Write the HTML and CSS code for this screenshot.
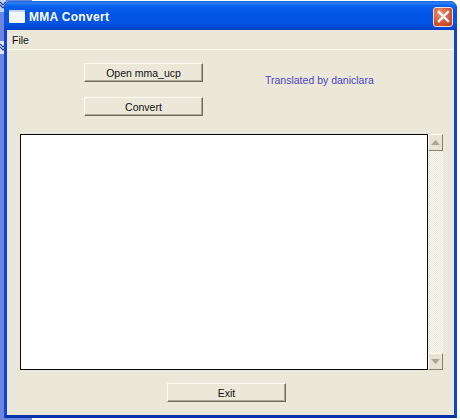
FILE: index.html
```html
<!DOCTYPE html>
<html lang="en">
<head>
<meta charset="utf-8">
<title>MMA Convert</title>
<link rel="stylesheet" href="styles.css">
</head>
<body>
<div class="desktop">
  <svg class="edge" width="6" height="56" viewBox="0 0 6 56">
    <rect x="0" y="0" width="6" height="12" fill="#c8d4f4"/>
    <rect x="0" y="41" width="6" height="13" fill="#dfe5f8"/>
    <path d="M0 2 L3 5 L6 2 M0 5 L3 8 L6 5" fill="none" stroke="#24408c" stroke-width="1.2"/>
    <path d="M0 44 L3 47 L6 44 M0 47 L3 50 L6 47" fill="none" stroke="#24408c" stroke-width="1.2"/>
  </svg>
  <div class="window">
    <div class="titlebar">
      <svg class="app-icon" width="16" height="13" viewBox="0 0 16 13"><rect x="0" y="0" width="16" height="13" rx="1" fill="#f4f8ff"/><rect x="0" y="0" width="16" height="2" fill="#c4d6f4"/></svg>
      <span class="title">MMA Convert</span>
      <button class="close" aria-label="Close">
        <svg width="13" height="13" viewBox="0 0 13 13"><path d="M2 2 L11 11 M11 2 L2 11" stroke="#fff" stroke-width="2.4" stroke-linecap="square"/></svg>
      </button>
    </div>
    <div class="menubar"><span class="menu-item">File</span></div>
    <div class="client">
      <div class="top">
        <div class="actions">
          <button class="btn wide">Open mma_ucp</button>
          <button class="btn wide">Convert</button>
        </div>
        <div class="credit">Translated by daniclara</div>
      </div>
      <div class="log">
        <div class="log-text"></div>
        <div class="scrollbar">
          <div class="arrow"><svg width="9" height="5" viewBox="0 0 9 5"><path d="M4.5 0 L9 5 L0 5 Z" fill="#a8a596"/></svg></div>
          <div class="track"></div>
          <div class="arrow"><svg width="9" height="5" viewBox="0 0 9 5"><path d="M0 0 L9 0 L4.5 5 Z" fill="#a8a596"/></svg></div>
        </div>
      </div>
      <div class="bottom"><button class="btn exit">Exit</button></div>
    </div>
  </div>
</div>
</body>
</html>
```
FILE: styles.css
```css
html, body {
  margin: 0;
  padding: 0;
}
body {
  width: 460px;
  height: 420px;
  overflow: hidden;
  background: #fdfdfd;
  font-family: "Liberation Sans", Arial, sans-serif;
}
.desktop {
  position: relative;
  width: 460px;
  height: 420px;
  box-sizing: border-box;
  padding: 1px 3px 2px 4px;
  background: linear-gradient(to right, #6d86dc 0, #6d86dc 32px, transparent 32px);
}
.edge {
  position: absolute;
  left: 0;
  top: 0;
}
.window {
  position: relative;
  height: 417px;
  box-sizing: border-box;
  display: flex;
  flex-direction: column;
  border: 3px solid #0f44d4;
  border-top: 0;
  border-bottom-color: #0832a8;
  border-radius: 7px 7px 0 0;
  background: #ebe8d9;
}
.titlebar {
  height: 29px;
  margin: 0 -3px;
  padding: 2px 4px 0 5px;
  box-sizing: border-box;
  display: flex;
  align-items: center;
  flex: none;
  border-radius: 7px 7px 0 0;
  background: linear-gradient(to bottom, #1a62dc 0, #2e80f2 2px, #0860ec 5px, #0254e4 14px, #0355e6 22px, #0340c4 29px);
  color: #fff;
}
.app-icon {
  flex: none;
}
.title {
  margin: 1px 0 0 4px;
  font-size: 12px;
  font-weight: bold;
  letter-spacing: 0.3px;
}
.close {
  margin-left: auto;
  width: 20px;
  height: 20px;
  padding: 0;
  display: flex;
  align-items: center;
  justify-content: center;
  border: 1px solid #f2dcd2;
  border-radius: 3px;
  background: radial-gradient(circle at 35% 30%, #ea9478 0, #d85a38 50%, #c03a18 100%);
}
.menubar {
  height: 20px;
  flex: none;
  box-sizing: border-box;
  padding-left: 5px;
  display: flex;
  align-items: center;
  border-bottom: 1px solid #fffff8;
  font-size: 10.5px;
  color: #111;
}
.client {
  flex: 1;
  display: flex;
  flex-direction: column;
  padding: 13px 10px 0 13px;
}
.top {
  display: flex;
  height: 71px;
  flex: none;
}
.actions {
  margin-left: 64px;
  display: flex;
  flex-direction: column;
  gap: 15px;
}
.btn {
  display: block;
  padding: 0;
  box-sizing: border-box;
  height: 19px;
  background: #ebe8d9;
  border: 1px solid;
  border-color: #fbfaf4 #6d6a5c #6d6a5c #fbfaf4;
  box-shadow: inset -1px -1px 0 #aca899;
  font-family: "Liberation Sans", Arial, sans-serif;
  font-size: 10.5px;
  color: #111;
}
.wide {
  width: 119px;
}
.credit {
  margin: 11px 0 0 62px;
  font-size: 10.5px;
  line-height: 13px;
  color: #4a44c4;
}
.log {
  display: flex;
  height: 236px;
  flex: none;
}
.log-text {
  width: 408px;
  flex: none;
  box-sizing: border-box;
  background: #fff;
  border: 1px solid #0a0a0a;
}
.scrollbar {
  width: 15px;
  flex: none;
  display: flex;
  flex-direction: column;
}
.arrow {
  height: 17px;
  flex: none;
  box-sizing: border-box;
  display: flex;
  align-items: center;
  justify-content: center;
  background: #e6e3d4;
  border: 1px solid;
  border-color: #fbfaf4 #85826f #85826f #fbfaf4;
}
.track {
  flex: 1;
  background-color: #f4f2ea;
  background-image: repeating-conic-gradient(#ebe8d9 0 25%, #fbfaf5 0 50%);
  background-size: 2px 2px;
}
.bottom {
  margin-top: 13px;
  padding-left: 147px;
}
.exit {
  width: 119px;
}
```
